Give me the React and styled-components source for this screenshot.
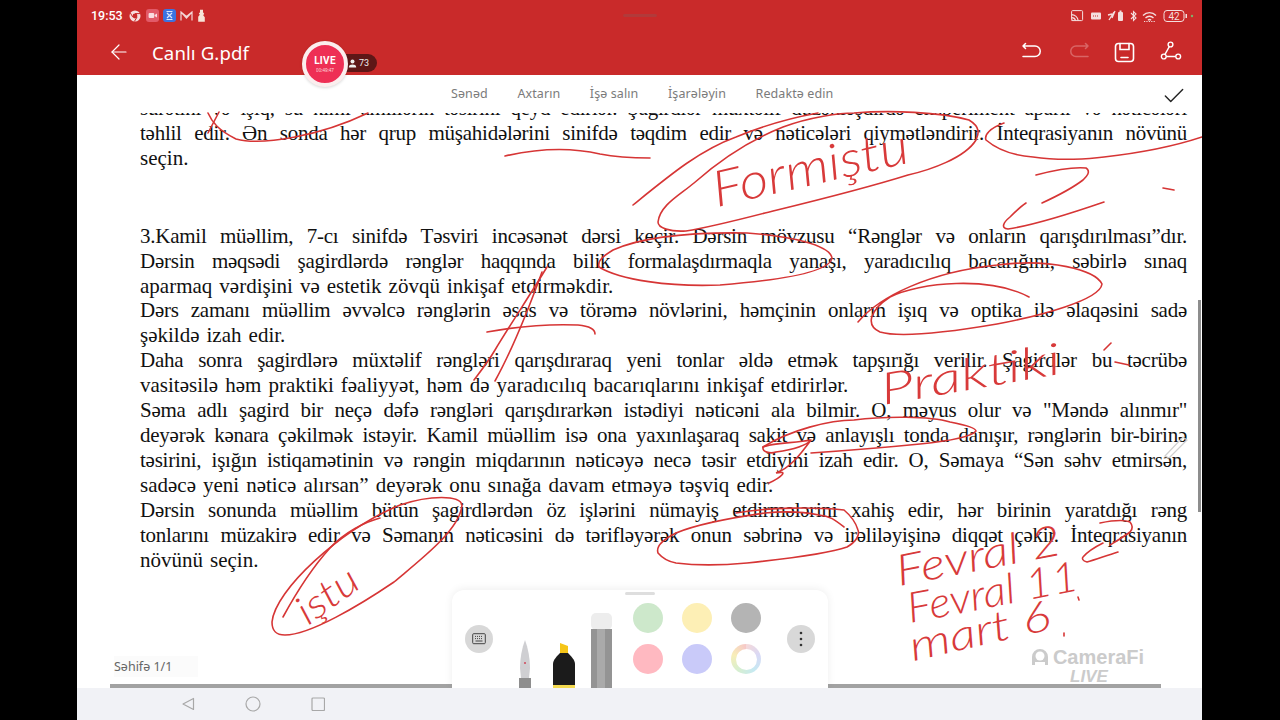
import React from 'react';
import styled, { createGlobalStyle } from 'styled-components';
import { ArrowLeft, Check } from 'lucide-react';

const GlobalStyle = createGlobalStyle`
  html, body { margin: 0; padding: 0; background: #000; }
  body { width: 1280px; height: 720px; overflow: hidden; font-family: "Noto Sans", sans-serif; }
`;

const Screen = styled.div`
  position: relative;
  width: 1125px;
  height: 720px;
  margin-left: 77px;
  display: flex;
  flex-direction: column;
  background: #fff;
  overflow: hidden;
`;

const Header = styled.header`
  background: #c92a2a;
  height: 75px;
  display: flex;
  flex-direction: column;
  flex-shrink: 0;
  color: #fff;
`;

const StatusBar = styled.div`
  height: 31px;
  display: flex;
  align-items: center;
  padding: 0 7px 0 14px;
  gap: 4px;
  position: relative;
`;

const Time = styled.span`
  font-family: Roboto, sans-serif;
  font-size: 12.5px;
  font-weight: 500;
  margin-right: 1px;
`;

const StatusRight = styled.div`
  margin-left: auto;
  display: flex;
  align-items: center;
`;

const Handle = styled.div`
  position: absolute;
  left: 546px;
  top: 14px;
  width: 34px;
  height: 3px;
  border-radius: 2px;
  background: #b23a3a;
`;

const AppBar = styled.div`
  flex: 1;
  display: flex;
  align-items: center;
  padding: 0 20px 2px 30px;
`;

const Title = styled.h1`
  margin: 0 0 0 21px;
  font-family: "Noto Sans", sans-serif;
  font-size: 18.6px;
  font-weight: 400;
  letter-spacing: 0.1px;
`;

const Actions = styled.div`
  margin-left: auto;
  display: flex;
  gap: 25px;
  align-items: center;
`;

const LiveBadge = styled.div`
  position: absolute;
  left: 225px;
  top: 41px;
  width: 46px;
  height: 46px;
  box-sizing: border-box;
  border: 4px solid #fbeeee;
  border-radius: 50%;
  background: #ee2f55;
  color: #fff;
  display: flex;
  flex-direction: column;
  align-items: center;
  justify-content: center;
  z-index: 3;
  box-shadow: 0 1px 3px rgba(0, 0, 0, 0.15);
`;

const LiveLabel = styled.span`
  font-family: Roboto, sans-serif;
  font-size: 10px;
  font-weight: 700;
  line-height: 12px;
  letter-spacing: 0.3px;
`;

const LiveTimer = styled.span`
  font-size: 4.5px;
  line-height: 7px;
  opacity: 0.8;
`;

const ViewerChip = styled.div`
  position: absolute;
  left: 262px;
  top: 54px;
  width: 38px;
  height: 18px;
  padding-left: 9px;
  box-sizing: border-box;
  border-radius: 0 9px 9px 0;
  background: #5e1717;
  color: #eee;
  display: flex;
  align-items: center;
  gap: 2px;
  font-family: Roboto, sans-serif;
  font-size: 9px;
  z-index: 2;
`;

const TabsBar = styled.nav`
  height: 38px;
  flex-shrink: 0;
  display: flex;
  align-items: center;
  gap: 29.5px;
  padding: 0 15px 2px 374px;
  box-sizing: border-box;
  background: #fff;
  position: relative;
  z-index: 1;
`;

const Tab = styled.span`
  font-size: 12.5px;
  color: #7b7b7b;
  letter-spacing: 0.1px;
`;

const CheckButton = styled.span`
  margin-left: auto;
  margin-top: 6px;
  display: flex;
  color: #222;
`;

const DocArea = styled.main`
  flex: 1;
  overflow: hidden;
  position: relative;
  display: flex;
  flex-direction: column;
`;

const DocText = styled.div`
  margin-top: -17px;
  padding: 0 15px 0 63px;
  font-family: "Liberation Serif", "Times New Roman", serif;
  font-size: 21px;
  line-height: 24.9px;
  color: #111;
`;

const Line = styled.div`
  text-align: ${(p) => (p.$end ? 'left' : 'justify')};
  text-align-last: ${(p) => (p.$end ? 'left' : 'justify')};
  letter-spacing: ${(p) => (p.$end ? '0' : '-0.25px')};
  word-spacing: ${(p) => (p.$end ? '1.8px' : '0')};
`;

const Gap = styled.div`
  height: 53px;
`;

const PageFooter = styled.div`
  margin-top: auto;
  margin-left: 33px;
  margin-right: 41px;
  border-bottom: 4px solid #a2a2a2;
  height: 36px;
  display: flex;
  align-items: center;
`;

const PageLabel = styled.span`
  font-size: 12.5px;
  color: #666;
  margin-left: 4px;
  padding: 2px 26px 2px 0;
  background: #fbfbfb;
`;

const NavBar = styled.div`
  height: 32px;
  flex-shrink: 0;
  background: #f1f2f6;
  display: flex;
  align-items: center;
  gap: 50px;
  padding-left: 104px;
  z-index: 4;
`;

const Palette = styled.div`
  position: absolute;
  left: 375px;
  bottom: 32px;
  width: 376px;
  height: 98px;
  box-sizing: border-box;
  padding: 0 13px;
  background: #fff;
  border-radius: 12px 12px 0 0;
  box-shadow: 0 -1px 8px rgba(0, 0, 0, 0.07);
  display: flex;
  align-items: center;
  z-index: 3;
`;

const PaletteHandle = styled.div`
  position: absolute;
  top: 2px;
  left: 173px;
  width: 30px;
  height: 3px;
  border-radius: 2px;
  background: #dedede;
`;

const RoundButton = styled.div`
  width: 28px;
  height: 28px;
  border-radius: 50%;
  background: #d8d8d8;
  display: flex;
  align-items: center;
  justify-content: center;
  flex-shrink: 0;
`;

const Pens = styled.svg`
  align-self: flex-end;
  margin-left: 20px;
  flex-shrink: 0;
`;

const Swatches = styled.div`
  display: grid;
  grid-template-columns: repeat(3, 30px);
  grid-auto-rows: 30px;
  column-gap: 19px;
  row-gap: 11px;
  margin-left: 20px;
  margin-top: -1px;
`;

const Swatch = styled.div`
  border-radius: 50%;
  background: ${(p) => p.$color};
`;

const RingSwatch = styled.div`
  border-radius: 50%;
  background: conic-gradient(#f6d9d9, #d9d9f6, #c6e9f2, #d7efd0, #f8eeb8, #f6c8c8);
  display: flex;
  align-items: center;
  justify-content: center;
  &::after {
    content: '';
    width: 21px;
    height: 21px;
    border-radius: 50%;
    background: #fff;
  }
`;

const MoreButton = styled(RoundButton)`
  margin-left: auto;
`;

const Ink = styled.svg`
  position: absolute;
  left: 0;
  top: 0;
  pointer-events: none;
  z-index: 2;
`;

const Hand = styled.span`
  position: absolute;
  left: ${(p) => p.$x - 77}px;
  top: ${(p) => p.$y}px;
  font-family: Lato, "Noto Sans", sans-serif;
  font-style: italic;
  font-weight: 300;
  font-size: ${(p) => p.$size}px;
  line-height: 1;
  color: #d83a3a;
  white-space: nowrap;
  transform: rotate(${(p) => p.$rot}deg) scaleX(${(p) => p.$sx || 1});
  transform-origin: left bottom;
  z-index: 2;
  pointer-events: none;
`;

const Scrollbar = styled.div`
  position: absolute;
  right: 1px;
  top: 300px;
  width: 3px;
  height: 212px;
  background: #8d8d8d;
  z-index: 2;
`;

const Watermark = styled.div`
  position: absolute;
  left: 950px;
  top: 646px;
  width: 120px;
  display: flex;
  flex-direction: column;
  align-items: center;
  color: #cbcbcb;
  font-family: "Liberation Sans", sans-serif;
  font-weight: 700;
  z-index: 2;
`;

const WatermarkRow = styled.div`
  display: flex;
  align-items: center;
  gap: 3px;
  font-size: 20px;
  line-height: 22px;
`;

const WatermarkLive = styled.span`
  font-size: 17px;
  line-height: 17px;
  font-style: italic;
  margin-left: 4px;
`;

const inkPaths = [
  'M208 113 C212 122 218 130 236 139 C262 146 320 136 368 113',
  'M219 112 L208 133',
  'M505 156 C540 148 570 147 600 154 C620 158 640 158 650 158',
  'M633 205 C670 175 700 150 736 137 C765 125 790 118 818 113',
  'M658 222 C660 205 680 195 694 183 C720 160 750 140 783 127 C810 117 840 113 854 113 C890 110 940 112 969 120 C982 128 978 135 976 140 C965 158 930 170 908 175 C860 190 810 202 765 213 C730 222 705 228 686 231 C670 232 658 228 658 222',
  'M1004 123 C990 128 984 135 986 140 C1000 152 1020 156 1033 157 C1060 161 1090 159 1104 157 C1140 153 1175 146 1202 137',
  'M1036 175 C1055 170 1075 167 1086 168 C1092 172 1085 178 1083 180 C1070 190 1055 197 1042 203',
  'M1104 202 C1075 212 1035 225 1008 229 C1000 228 1004 222 1010 217 C1015 212 1020 207 1026 203',
  'M1163 188 L1174 190',
  'M613 250 C640 238 680 232 747 233 C790 236 830 245 832 258 C830 272 783 280 720 285 C670 287 620 280 599 267 C597 260 605 255 613 250',
  'M858 322 C880 296 930 272 997 265 C1050 258 1095 270 1102 284 C1100 300 1040 316 997 324 C950 332 900 338 880 332 C865 325 870 310 890 297 C920 282 990 276 1029 297',
  'M547 267 C530 295 510 325 495 350 C488 362 480 372 474 380',
  'M542 272 C530 305 515 345 495 381',
  'M487 332 C520 326 555 324 578 325 C590 326 595 330 595 334',
  'M1111 343 L1104 350',
  'M1115 362 L1129 365',
  'M811 440 C795 443 772 443 763 447 C762 452 770 454 776 452 C790 450 805 447 811 440 C800 455 790 468 776 473 C790 470 780 478 769 483',
  'M763 447 C790 430 830 420 854 420 C885 416 930 416 950 422 C965 425 976 428 976 431 C970 438 940 442 920 444 C880 448 840 451 811 453',
  'M844 527 C835 520 830 516 819 515 C800 511 785 511 765 513 C730 518 695 525 676 533 C662 540 656 547 658 553 C664 560 670 562 676 563 C700 566 725 565 747 563 C785 559 830 553 847 547 C856 542 860 535 858 530 C855 520 850 515 844 510 C815 507 770 507 736 513',
  'M1100 523 C1115 520 1125 520 1130 522 C1134 527 1132 530 1130 532 C1122 538 1115 542 1110 545',
  'M1118 552 C1105 556 1095 560 1087 562 C1082 561 1082 558 1083 557 C1088 551 1095 547 1103 543',
  'M272 622 C275 590 340 530 400 505 C430 495 460 495 462 505 C460 530 420 560 394 582 C360 605 310 635 285 635 C275 635 272 630 272 622',
  'M283 617 C295 595 310 570 330 548 C345 532 365 522 380 518',
  'M1078 597 L1079 600',
  'M1064 633 L1064 636',
];

const handwriting = [
  { text: 'Formiştu', x: 718, y: 163, size: 50, rot: -13, sx: 1.12 },
  { text: 'Praktiki', x: 884, y: 366, size: 44, rot: -10, sx: 1.4 },
  { text: 'Fevral 2', x: 900, y: 548, size: 43, rot: -11, sx: 1.2 },
  { text: 'Fevral 11', x: 911, y: 586, size: 42, rot: -11, sx: 1.08 },
  { text: 'mart 6', x: 914, y: 624, size: 42, rot: -13, sx: 1.25 },
  { text: 'iştu', x: 311, y: 590, size: 40, rot: -36, sx: 1.15 },
];

const Icon = ({ w, h, children, ...rest }) => (
  <svg width={w} height={h} viewBox={`0 0 ${w} ${h}`} fill="none" {...rest}>
    {children}
  </svg>
);

const StatusIconsLeft = () => (
  <>
    <Icon w={14} h={14}>
      <circle cx="7" cy="7" r="5.5" fill="#f6dcdc" />
      <circle cx="7" cy="7" r="2.4" fill="#c92a2a" />
      <path d="M7 4.6h5M4.8 8.2 2.4 4M9 8.2 6.4 12.4" stroke="#c92a2a" />
    </Icon>
    <Icon w={13} h={13}>
      <rect width="13" height="13" rx="3" fill="#e25a68" />
      <rect x="2.6" y="4" width="5.6" height="5" rx="1" fill="#f9dce0" />
      <path d="M8.6 6 11 4.5v4L8.6 7z" fill="#f9dce0" />
    </Icon>
    <Icon w={13} h={13}>
      <rect width="13" height="13" rx="3" fill="#3d73e0" />
      <path d="M3.5 2.5h6M4 4l5 5M9 4 4 9M3.5 10.5h6" stroke="#dbe6fb" strokeWidth="1.2" />
    </Icon>
    <Icon w={13} h={12}>
      <path d="M1 10.5V2l5.5 4.5L12 2v8.5M1 2l5.5 6L12 2" stroke="#f4d6d6" strokeWidth="1.2" />
    </Icon>
    <Icon w={9} h={13}>
      <path d="M3 .8h3v2.4l1.2 1.6-1 1.4 1.6 2v4.6H1.2V7.8l1.6-2-1-1.4L3 3.2z" fill="#f7e4d8" />
    </Icon>
  </>
);

const StatusIconsRight = () => (
  <Icon w={124} h={14}>
    <rect x="0.6" y="1.6" width="11" height="10" rx="1" stroke="#f4dede" />
    <path d="M0.6 11.5a1 1 0 0 1 1.6 0M0.6 8.6a4 4 0 0 1 4 3M0.6 5.6a7 7 0 0 1 6.6 6" stroke="#f4dede" strokeWidth="1.2" />
    <rect x="20" y="3.5" width="10" height="7" rx="1" fill="#f4dede" />
    <path d="M22 7h6" stroke="#c92a2a" strokeDasharray="1 1" />
    <path d="M38 11 43 3M41 5l-4 1M44 2l-3 7" stroke="#f4dede" strokeWidth="1.3" />
    <rect x="47" y="3" width="5" height="9" rx="1" fill="#f4dede" />
    <rect x="48.5" y="1.5" width="2" height="1.5" fill="#f4dede" />
    <path d="m60 4 5 5-2.5 2.5V2.5L65 5l-5 5" stroke="#f4dede" strokeWidth="1.1" />
    <path d="M72 6.5a9 9 0 0 1 13 0M74.5 9a5.5 5.5 0 0 1 8 0M77 11.2a2 2 0 0 1 3 0" stroke="#f4dede" strokeWidth="1.3" />
    <path d="M73 12.5h12" stroke="#f4dede" strokeDasharray="1.2 1.2" />
    <rect x="93" y="1.5" width="20" height="11" rx="3" stroke="#f4dede" />
    <text x="103" y="11" textAnchor="middle" fontSize="10" fontFamily="Roboto, sans-serif" fill="#f4dede">42</text>
    <rect x="114.5" y="5" width="1.5" height="4" fill="#f4dede" />
    <circle cx="121" cy="7" r="1.2" fill="#7fb26a" />
  </Icon>
);

const UndoIcon = ({ flip, color }) => (
  <Icon w={21} h={20} style={flip ? { transform: 'scaleX(-1)' } : undefined}>
    <path d="M1 4h12a4.5 4.5 0 0 1 0 10.5H1M3.5 1.5 1 4l2.5 2.5" stroke={color} strokeWidth="1.5" strokeLinecap="round" strokeLinejoin="round" />
  </Icon>
);

const SaveIcon = () => (
  <Icon w={21} h={21}>
    <rect x="1.5" y="1.5" width="18" height="18" rx="3" stroke="#fff" strokeWidth="1.6" />
    <path d="M6 1.5v6h9v-6M7 15.5h7" stroke="#fff" strokeWidth="1.6" strokeLinecap="round" />
  </Icon>
);

const ShareIcon = () => (
  <Icon w={22} h={22}>
    <circle cx="10.5" cy="3.5" r="2.4" stroke="#fff" strokeWidth="1.4" />
    <circle cx="3.8" cy="15.5" r="2.4" stroke="#fff" strokeWidth="1.4" />
    <circle cx="18.2" cy="15.5" r="2.4" stroke="#fff" strokeWidth="1.4" />
    <path d="M9.3 5.6 5 13.4M6.3 15.5h9.5" stroke="#fff" strokeWidth="1.4" />
  </Icon>
);

const lines = [
  ['sürətini və işıq, su kimi amillərin təsirini qeyd edirlər. Şagirdlər müxtəlif düzənləşdirdə eksperiment aparır və nəticələri'],
  ['təhlil edir. Ən sonda hər qrup müşahidələrini sinifdə təqdim edir və nəticələri qiymətləndirir. İnteqrasiyanın növünü'],
  ['seçin.', true],
  null,
  ['3.Kamil müəllim, 7-cı sinifdə Təsviri incəsənət dərsi keçir. Dərsin mövzusu “Rənglər və onların qarışdırılması”dır.'],
  ['Dərsin məqsədi şagirdlərdə rənglər haqqında bilik formalaşdırmaqla yanaşı, yaradıcılıq bacarığını, səbirlə sınaq'],
  ['aparmaq vərdişini və estetik zövqü inkişaf etdirməkdir.', true],
  ['Dərs zamanı müəllim əvvəlcə rənglərin əsas və törəmə növlərini, həmçinin onların işıq və optika ilə əlaqəsini sadə'],
  ['şəkildə izah edir.', true],
  ['Daha sonra şagirdlərə müxtəlif rəngləri qarışdıraraq yeni tonlar əldə etmək tapşırığı verilir. Şagirdlər bu təcrübə'],
  ['vasitəsilə həm praktiki fəaliyyət, həm də yaradıcılıq bacarıqlarını inkişaf etdirirlər.', true],
  ['Səma adlı şagird bir neçə dəfə rəngləri qarışdırarkən istədiyi nəticəni ala bilmir. O, məyus olur və "Məndə alınmır"'],
  ['deyərək kənara çəkilmək istəyir. Kamil müəllim isə ona yaxınlaşaraq sakit və anlayışlı tonda danışır, rənglərin bir-birinə'],
  ['təsirini, işığın istiqamətinin və rəngin miqdarının nəticəyə necə təsir etdiyini izah edir. O, Səmaya “Sən səhv etmirsən,'],
  ['sadəcə yeni nəticə alırsan” deyərək onu sınağa davam etməyə təşviq edir.', true],
  ['Dərsin sonunda müəllim bütün şagirdlərdən öz işlərini nümayiş etdirmələrini xahiş edir, hər birinin yaratdığı rəng'],
  ['tonlarını müzakirə edir və Səmanın nəticəsini də tərifləyərək onun səbrinə və irəliləyişinə diqqət çəkir. İnteqrasiyanın'],
  ['növünü seçin.', true],
];

const tabs = ['Sənəd', 'Axtarın', 'İşə salın', 'İşarələyin', 'Redaktə edin'];

const App = () => (
  <>
    <GlobalStyle />
    <Screen>
      <Header>
        <StatusBar>
          <Time>19:53</Time>
          <StatusIconsLeft />
          <Handle />
          <StatusRight>
            <StatusIconsRight />
          </StatusRight>
        </StatusBar>
        <AppBar>
          <ArrowLeft size={24} strokeWidth={1.2} />
          <Title>Canlı G.pdf</Title>
          <Actions>
            <UndoIcon color="#fff" />
            <UndoIcon flip color="#d96565" />
            <SaveIcon />
            <ShareIcon />
          </Actions>
        </AppBar>
      </Header>
      <LiveBadge>
        <LiveLabel>LIVE</LiveLabel>
        <LiveTimer>00:49:47</LiveTimer>
      </LiveBadge>
      <ViewerChip>
        <Icon w={9} h={9}>
          <circle cx="4.5" cy="2.6" r="2" fill="#eee" />
          <path d="M.8 8.5c0-2.4 1.6-3 3.7-3s3.7.6 3.7 3z" fill="#eee" />
        </Icon>
        73
      </ViewerChip>
      <TabsBar>
        {tabs.map((t) => (
          <Tab key={t}>{t}</Tab>
        ))}
        <CheckButton>
          <Check size={26} strokeWidth={1.3} />
        </CheckButton>
      </TabsBar>
      <DocArea>
        <DocText>
          {lines.map((l, i) =>
            l ? (
              <Line key={i} $end={l[1]}>
                {l[0]}
              </Line>
            ) : (
              <Gap key={i} />
            )
          )}
        </DocText>
        <PageFooter>
          <PageLabel>Səhifə 1/1</PageLabel>
        </PageFooter>
      </DocArea>
      <NavBar>
        <Icon w={14} h={14}>
          <path d="M12.5 1.5v11L2 7z" stroke="#a8a8a8" strokeWidth="1.2" strokeLinejoin="round" />
        </Icon>
        <Icon w={16} h={16}>
          <circle cx="8" cy="8" r="7" stroke="#a8a8a8" strokeWidth="1.2" />
        </Icon>
        <Icon w={14} h={14}>
          <rect x="1" y="1" width="12.5" height="12.5" rx="1" stroke="#a8a8a8" strokeWidth="1.2" />
        </Icon>
      </NavBar>
      <Palette>
        <PaletteHandle />
        <RoundButton>
          <Icon w={14} h={12}>
            <rect x="0.7" y="0.7" width="12.6" height="10" rx="1" stroke="#444" />
            <path d="M3 3.4h8M3 5.6h8" stroke="#444" strokeDasharray="1 1" />
            <path d="M3.5 8h7" stroke="#444" />
          </Icon>
        </RoundButton>
        <Pens width="100" height="76" viewBox="0 0 100 76">
          <path d="M6 75V66h12v10H6z" fill="#8e8e8e" />
          <path d="M12 28c3 8 5 18 5 28l-1 10H8l-1-10c0-10 2-20 5-28z" fill="#cfcfd2" />
          <circle cx="12" cy="51" r="1" fill="#d0475a" />
          <path d="M47 41v-10l8 3v7z" fill="#f5c518" />
          <path d="M40 76V52c0-4 4-8 7-11h8c3 3 7 7 7 11v24z" fill="#1b1b1b" />
          <path d="M40 73h22v3H40z" fill="#f3d94f" />
          <rect x="78" y="1" width="21" height="17" rx="5" fill="#ededed" />
          <rect x="78" y="17" width="21" height="59" fill="#949494" />
          <rect x="84" y="17" width="8" height="59" fill="#aaa" />
        </Pens>
        <Swatches>
          <Swatch $color="#cde8cb" />
          <Swatch $color="#fdefb5" />
          <Swatch $color="#b4b4b4" />
          <Swatch $color="#ffb9c1" />
          <Swatch $color="#c9caf9" />
          <RingSwatch />
        </Swatches>
        <MoreButton>
          <Icon w={4} h={16}>
            <circle cx="2" cy="2" r="1.3" fill="#333" />
            <circle cx="2" cy="8" r="1.3" fill="#333" />
            <circle cx="2" cy="14" r="1.3" fill="#333" />
          </Icon>
        </MoreButton>
      </Palette>
      <Ink width="1125" height="720" viewBox="77 0 1125 720" fill="none">
        {inkPaths.map((d) => (
          <path key={d} d={d} stroke="#d63535" strokeWidth="1.6" strokeLinecap="round" />
        ))}
        <path d="M1165 456 1183 437l4 3-18 18z" stroke="#cfcfcf" strokeWidth="1.2" />
      </Ink>
      {handwriting.map((h) => (
        <Hand key={h.text} $x={h.x} $y={h.y} $size={h.size} $rot={h.rot} $sx={h.sx}>
          {h.text}
        </Hand>
      ))}
      <Scrollbar />
      <Watermark>
        <WatermarkRow>
          <Icon w={20} h={18}>
            <path d="M2 17V9a8 8 0 0 1 16 0v8h-3v-3H5v3z" fill="#cbcbcb" />
            <circle cx="10" cy="8" r="4.5" fill="#fff" />
          </Icon>
          CameraFi
        </WatermarkRow>
        <WatermarkLive>LIVE</WatermarkLive>
      </Watermark>
    </Screen>
  </>
);

export default App;
